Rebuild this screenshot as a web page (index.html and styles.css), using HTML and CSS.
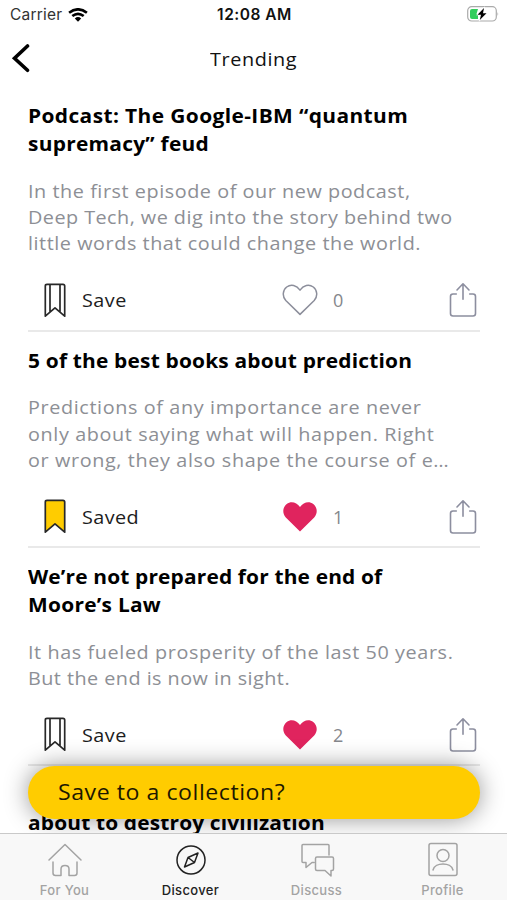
FILE: index.html
```
<!DOCTYPE html>
<html lang="en">
<head>
<meta charset="utf-8">
<title>Trending</title>
<link rel="stylesheet" href="styles.css">
</head>
<body>
<svg class="defs" aria-hidden="true">
  <defs>
    <symbol id="bookmark" viewBox="0 0 22 35"><path d="M1.3 33.2V3Q1.3 1.3 3 1.3H19Q20.7 1.3 20.7 3V33.2L11 24.8Z"/></symbol>
    <symbol id="ribbon" viewBox="0 0 22 35"><path d="M1.3 33.2V3Q1.3 1.3 3 1.3H19Q20.7 1.3 20.7 3V33.2L11 24.8ZM6 1.3V29M16 1.3V29"/></symbol>
    <symbol id="heart" viewBox="0 0 36 32"><path d="M18 30.4L3.8 16.5C-.1 12.2.8 6 4.7 3C9 0 14.6 1.2 18 6.1C21.4 1.2 27 0 31.3 3C35.2 6 36.1 12.2 32.2 16.5Z"/></symbol>
    <symbol id="share" viewBox="0 0 28 36"><path d="M7.3 12H4Q1.5 12 1.5 14.5V31.5Q1.5 34 4 34H24Q26.5 34 26.5 31.5V14.5Q26.5 12 24 12H20.7M14 17.3V2M8 8L14 1.8L20 8"/></symbol>
  </defs>
</svg>
<div class="screen">
  <header class="status">
    <div class="carrier">Carrier
      <svg width="20" height="14" viewBox="0 0 20 14"><path d="M1.1 4.8Q10-2.2 18.9 4.8M4.3 8.1Q10 3.5 15.7 8.1" fill="none" stroke="#000" stroke-width="2.6"/><path d="M6.8 10.4Q10 7.8 13.2 10.4L10 13.8Z"/></svg>
    </div>
    <div class="clock">12:08 AM</div>
    <svg class="battery" width="32" height="16" viewBox="0 0 32 16"><rect x=".7" y=".7" width="28.6" height="14.3" rx="4" fill="none" stroke="#aaa" stroke-width="1.2"/><path d="M5 3H11L9.5 8H11V13H5Q3 13 3 11V5Q3 3 5 3Z" fill="#32cd5c"/><path d="M30.5 6Q32 8 30.5 10Z" fill="#aaa"/><path d="M17 2L10.5 8.7H14L12.8 14L19.5 7.2H16Z" stroke="#fff" stroke-width="1.2" paint-order="stroke"/></svg>
  </header>
  <nav class="topbar">
    <svg class="back" width="20" height="32" viewBox="0 0 20 32"><path d="M17.5 4L4.5 16.2L17.5 28.3"/></svg>
    <h1><span class="line ls-56">Trending</span></h1>
  </nav>
  <main class="feed">
    <article>
      <h2><span class="line ls-36">Podcast: The Google-IBM “quantum</span><span class="line ls-24">supremacy” feud</span></h2>
      <p><span class="line ls-50">In the first episode of our new podcast,</span><span class="line ls-42">Deep Tech, we dig into the story behind two</span><span class="line ls-50">little words that could change the world.</span></p>
      <div class="actions">
        <svg class="mark"><use href="#ribbon"/></svg><span class="label"><span class="line ls-42">Save</span></span>
        <svg class="heart"><use href="#heart"/></svg><span class="count">0</span>
        <svg class="share"><use href="#share"/></svg>
      </div>
    </article>
    <article>
      <h2><span class="line ls-18">5 of the best books about prediction</span></h2>
      <p><span class="line ls-56">Predictions of any importance are never</span><span class="line ls-56">only about saying what will happen. Right</span><span class="line ls-56">or wrong, they also shape the course of e…</span></p>
      <div class="actions">
        <svg class="mark saved"><use href="#bookmark"/></svg><span class="label"><span class="line ls-36">Saved</span></span>
        <svg class="heart liked"><use href="#heart"/></svg><span class="count">1</span>
        <svg class="share"><use href="#share"/></svg>
      </div>
    </article>
    <article>
      <h2><span class="line ls-14">We’re not prepared for the end of</span><span class="line ls-24">Moore’s Law</span></h2>
      <p><span class="line ls-54">It has fueled prosperity of the last 50 years.</span><span class="line ls-42">But the end is now in sight.</span></p>
      <div class="actions">
        <svg class="mark"><use href="#ribbon"/></svg><span class="label"><span class="line ls-42">Save</span></span>
        <svg class="heart liked"><use href="#heart"/></svg><span class="count">2</span>
        <svg class="share"><use href="#share"/></svg>
      </div>
    </article>
    <article class="last">
      <h2><span class="line ls-14">about to destroy civilization</span></h2>
    </article>
  </main>
  <div class="toast"><span class="line ls-50">Save to a collection?</span></div>
  <footer class="tabs">
    <a class="tab"><svg viewBox="0 0 36 36"><path d="M2 18L18 2.5L34 18M6 20V31Q6 33.5 8.5 33.5H14V27Q14 23.5 18 23.5T22 27V33.5H27.5Q30 33.5 30 31V20"/></svg><span>For You</span></a>
    <a class="tab active"><svg viewBox="0 0 36 36"><circle cx="18" cy="18" r="14"/><path d="M25 11L21.5 20.5L11.5 25L15 15.5ZM15 15.5L21.5 20.5"/></svg><span>Discover</span></a>
    <a class="tab"><svg viewBox="0 0 36 36"><path d="M30 13V3.5Q30 2.5 29 2.5H4Q3 2.5 3 3.5V19.5Q3 20.5 4 20.5H7V25.5L13 20.5H15M18 15H33Q34.5 15 34.5 16.5V27Q34.5 28.5 33 28.5H32V34L26 28.5H18Q16.5 28.5 16.5 27V16.5Q16.5 15 18 15Z"/></svg><span>Discuss</span></a>
    <a class="tab"><svg viewBox="0 0 36 36"><rect x="4" y="1.5" width="28" height="32" rx="2"/><circle cx="18" cy="13.5" r="6"/><path d="M8 28C10 20 26 20 28 28"/></svg><span>Profile</span></a>
  </footer>
</div>
</body>
</html>
```
FILE: styles.css
```
* { box-sizing: border-box; }
body { margin: 0; background: #fff; color: #000; font-family: "Open Sans", "Noto Sans", sans-serif; }
h1, h2, p { margin: 0; }
.defs { position: absolute; width: 0; height: 0; }
.screen { position: relative; display: flex; flex-direction: column; width: 507px; height: 900px; overflow: hidden; }

.line { display: block; width: max-content; white-space: nowrap; transform: scaleX(1.1); transform-origin: 0 50%; }
.ls-14 { letter-spacing: .14px; }
.ls-18 { letter-spacing: .17px; }
.ls-24 { letter-spacing: .24px; }
.ls-36 { letter-spacing: .36px; }
.ls-42 { letter-spacing: .42px; }
.ls-50 { letter-spacing: .5px; }
.ls-54 { letter-spacing: .54px; }
.ls-56 { letter-spacing: .56px; }

.status { display: grid; grid-template-columns: 1fr auto 1fr; align-items: center; flex: none; height: 30px; padding: 1px 8px 2px 10px; font-family: Inter, sans-serif; font-size: 15.5px; }
.carrier { display: flex; align-items: center; gap: 6px; letter-spacing: .2px; color: #333; }
.clock { font-weight: 600; letter-spacing: .5px; color: #111; }
.battery { justify-self: end; margin-top: -1px; }

.topbar { display: grid; grid-template-columns: 60px 1fr 60px; align-items: center; flex: none; height: 57px; padding: 0 8px; }
.back { margin-left: 2px; margin-top: -2px; fill: none; stroke: #000; stroke-width: 3.6; stroke-linecap: round; }
.topbar h1 { display: flex; justify-content: center; font-size: 18px; font-weight: 400; line-height: 28px; color: #111; }
.topbar .line { transform-origin: 50% 50%; }

.feed { flex: 1; min-height: 0; overflow: hidden; padding: 0 27px 0 28px; }
article { padding-top: 15px; border-bottom: 2px solid #e9e9e9; }
h2 { font-size: 19px; line-height: 28px; font-weight: 700; }
p { padding-top: 19.7px; font-size: 18px; line-height: 26.3px; color: #8d8f95; }
.last { padding-top: 43px; border: 0; }

.actions { display: flex; align-items: center; height: 73px; padding: 14px 3px 0 16px; }
.mark { width: 22px; height: 35px; fill: none; stroke: #282828; stroke-width: 1.7; stroke-linejoin: round; }
.mark.saved { fill: #fc0; }
.label { width: 200px; margin-left: 16px; font-size: 18px; color: #1c1c1c; }
.heart { width: 36px; height: 32px; fill: none; stroke: #8c8e9b; stroke-width: 1.5; stroke-linejoin: round; }
.heart.liked { fill: #e0245e; stroke: none; }
.count { margin-left: 15px; font-size: 18px; color: #85878c; }
.share { width: 28px; height: 36px; margin-left: auto; fill: none; stroke: #8c8e9f; stroke-width: 1.6; stroke-linecap: round; stroke-linejoin: round; }

.toast { position: absolute; left: 28px; top: 766px; width: 452px; height: 53px; padding-left: 30px; border-radius: 27px; background: #fc0; color: #1d1800; font-size: 21px; line-height: 53px; box-shadow: 0 0 24px rgba(0, 0, 0, .42); }

.tabs { position: relative; display: grid; grid-template-columns: repeat(4, 126px); justify-content: center; flex: none; height: 67px; border-top: 1px solid #c9c9c9; background: #f8f8f8; font-family: Inter, sans-serif; font-size: 13px; font-weight: 500; letter-spacing: .35px; color: #a3a3a3; }
.tab { display: flex; flex-direction: column; align-items: center; padding-top: 8px; }
.tab svg { width: 36px; height: 36px; fill: none; stroke: currentColor; stroke-width: 1.5; stroke-linejoin: round; stroke-linecap: round; }
.tab span { line-height: 24px; }
.tab.active { color: #222; }
```
